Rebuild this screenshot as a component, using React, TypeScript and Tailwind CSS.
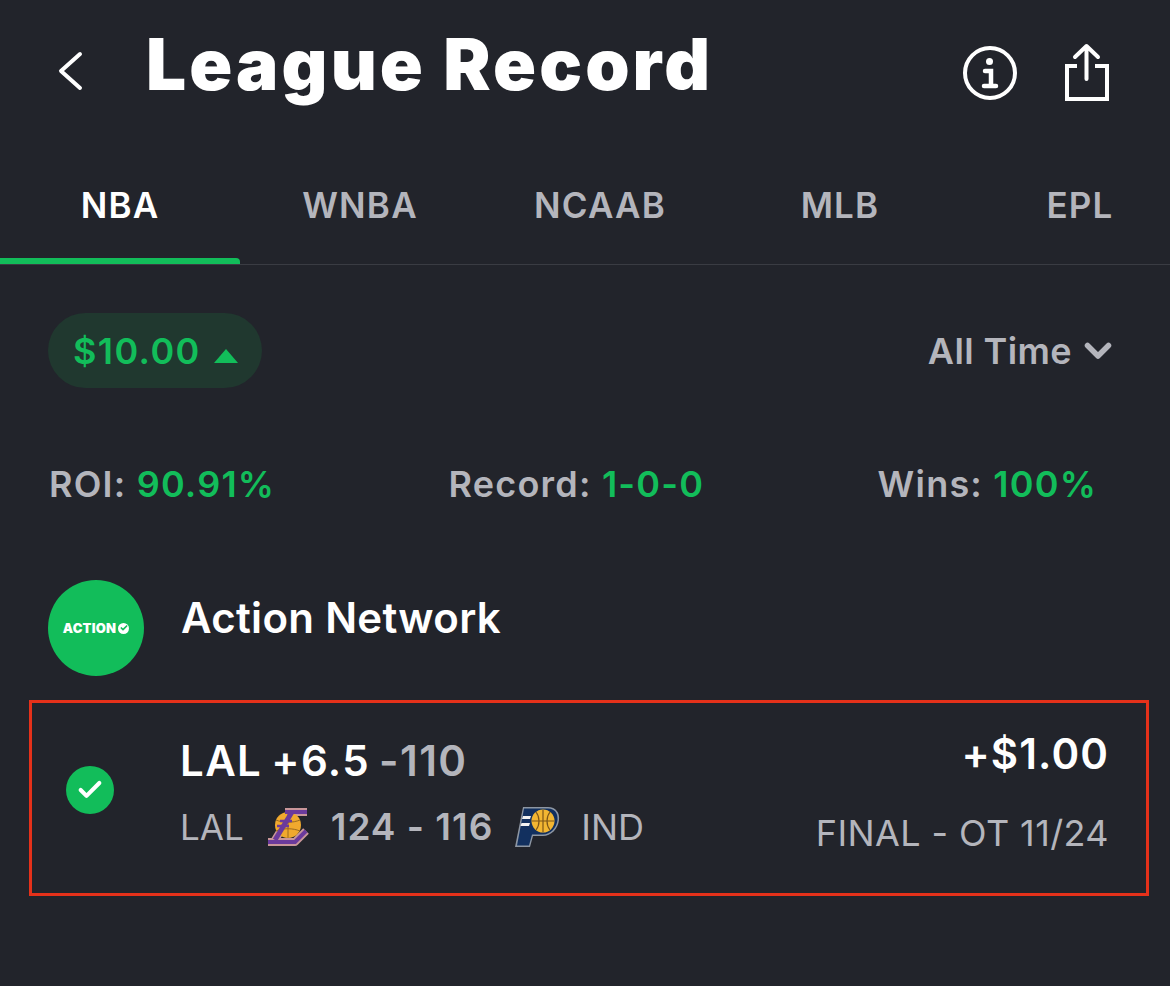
import React from 'react';
import { Check } from 'lucide-react';

const tabs = ['NBA', 'WNBA', 'NCAAB', 'MLB', 'EPL'];

function BackIcon() {
  return (
    <svg width="28" height="40" viewBox="0 0 28 40" fill="none" stroke="#fff" strokeWidth="4" strokeLinecap="round" strokeLinejoin="round">
      <path d="M23 3 4 20l19 17" />
    </svg>
  );
}

function InfoIcon() {
  return (
    <svg width="56" height="56" viewBox="0 0 56 56" fill="none" stroke="#fff" strokeLinecap="round">
      <circle cx="28" cy="28" r="25" strokeWidth="4" />
      <circle cx="27.5" cy="16.5" r="3.5" fill="#fff" stroke="none" />
      <path d="M23 26h6v14M22 41h12" strokeWidth="4.5" />
    </svg>
  );
}

function ShareIcon() {
  return (
    <svg width="46" height="60" viewBox="0 0 46 60" fill="none" stroke="#fff" strokeWidth="4" strokeLinecap="round" strokeLinejoin="round">
      <path d="M22.500 36V3M11 14 22.500 3 34 14" />
      <path d="M13 23H3v33h40V23H31" strokeLinecap="butt" strokeLinejoin="miter" />
    </svg>
  );
}

function TimeChevron() {
  return (
    <svg width="28" height="20" viewBox="0 0 28 20" fill="none" stroke="#b4b5bc" strokeWidth="5.500" strokeLinecap="round" strokeLinejoin="round">
      <path d="M3.500 4.500 14 15 24.500 4.500" />
    </svg>
  );
}

function LakersLogo() {
  const stem = 'M27 5 10 33';
  const bars = 'M20 5h22M3 35h27l11-11';
  const stripes = 'M15 14h12M12 19h12';
  return (
    <svg width="46" height="40" viewBox="0 0 46 40" fill="none" strokeLinejoin="round">
      <path d={`${stem}${bars}`} stroke="#c9969a" strokeWidth="8" />
      <circle cx="23" cy="18" r="13" fill="#f0a92e" />
      <path d="M23 5v26M11 13c7 3 17 3 24 0M11 24c7-3 17-3 24 0" stroke="#9a6a20" strokeWidth="1" />
      <path d={stem} stroke="#6b3a9c" strokeWidth="5" />
      <path d={bars} stroke="#6b3a9c" strokeWidth="4" />
      <path d={stripes} stroke="#6b3a9c" strokeWidth="2.500" />
    </svg>
  );
}

function PacersLogo() {
  return (
    <svg width="46" height="40" viewBox="0 0 46 40">
      <path d="M8 0h25c8 0 12 6 11 13-1 9-8 16-16 16H18l-3 11H0z" fill="#8d96a3" />
      <path d="M9 1.500h24c7 0 10 5 9.500 11.500-1 8-7 14.500-14.500 14.500H17l-3 11H2z" fill="#12305f" />
      <circle cx="28" cy="14" r="11.500" fill="#f2b632" />
      <path d="M17 14h22M28 3v22M21 5c4 5 4 13 0 18M35 5c-4 5-4 13 0 18" stroke="#7c5518" strokeWidth="1.200" fill="none" />
      <path d="M8 9h8l-1 3H7zM6.500 16H15l-1 3H5.500z" fill="#f2f2f2" />
    </svg>
  );
}

function Stat({ label, value }: { label: string; value: string }) {
  return (
    <span className="text-[36px] font-semibold leading-none tracking-[1.200px] text-[#b4b5bc]">
      {label}: <span className="text-[#12bd5a]">{value}</span>
    </span>
  );
}

export default function App() {
  return (
    <div
      className="h-[986px] w-[1170px] overflow-hidden bg-[#22242b] text-white"
      style={{ fontFamily: 'Inter, "Liberation Sans", sans-serif' }}
    >
      <header className="flex h-[136px] items-start pl-[57px] pr-[60px]">
        <div className="mt-[51px]">
          <BackIcon />
        </div>
        <h1 className="ml-[61px] mt-[24px] text-[71px] font-black leading-[80px] tracking-[3.100px] text-white">
          League Record
        </h1>
        <div className="ml-auto mt-[43px] flex items-center gap-[46px]">
          <InfoIcon />
          <ShareIcon />
        </div>
      </header>

      <nav className="flex h-[129px] overflow-hidden border-b border-[#3a3c43]">
        {tabs.map((tab, i) => (
          <div key={tab} className="flex h-[128px] w-[240px] shrink-0 flex-col">
            <div
              className={`flex flex-1 items-center justify-center pt-[16px] text-[35px] font-semibold tracking-[1.200px] ${
                i === 0 ? 'text-white' : 'text-[#b4b5bc]'
              }`}
            >
              {tab}
            </div>
            <div className={`h-[6px] rounded-tr-[4px] ${i === 0 ? 'bg-[#12bd5a]' : ''}`} />
          </div>
        ))}
      </nav>

      <div className="mt-[48px] flex items-center justify-between pl-[48px] pr-[58px]">
        <div className="flex h-[75px] w-[214px] items-center gap-[13px] rounded-full bg-[#20382f] pl-[25px]">
          <span className="text-[36px] font-semibold leading-none tracking-[1.400px] text-[#12bd5a]">$10.00</span>
          <span className="mt-[10px] h-0 w-0 border-x-[12px] border-b-[14px] border-x-transparent border-b-[#12bd5a]" />
        </div>
        <div className="flex items-center gap-[12px] text-[#b4b5bc]">
          <span className="text-[36px] font-semibold leading-none tracking-[0.4px]">All Time</span>
          <TimeChevron />
        </div>
      </div>

      <div className="mt-[78px] flex items-center justify-between pl-[49px] pr-[73px]">
        <Stat label="ROI" value="90.91%" />
        <Stat label="Record" value="1-0-0" />
        <Stat label="Wins" value="100%" />
      </div>

      <div className="mt-[78px] flex items-start pl-[48px]">
        <div className="flex h-[96px] w-[96px] items-center justify-center gap-[2px] rounded-full bg-[#12bd5a]">
          <span className="text-[13px] font-black leading-none tracking-[0.2px] text-white">ACTION</span>
          <span className="flex h-[11px] w-[11px] items-center justify-center rounded-full bg-white">
            <Check className="h-[8px] w-[8px] text-[#12bd5a]" strokeWidth={5} />
          </span>
        </div>
        <span className="ml-[37px] mt-[14px] text-[42px] font-semibold leading-[48px] tracking-[0.3px] text-white">
          Action Network
        </span>
      </div>

      <div className="ml-[29px] mt-[24px] flex h-[196px] w-[1120px] items-start border-[3px] border-[#e5311a] pl-[34px] pr-[37px]">
        <div className="mt-[63px] flex h-[48px] w-[48px] items-center justify-center rounded-full bg-[#12bd5a]">
          <Check className="h-[28px] w-[28px] text-white" strokeWidth={3.5} />
        </div>
        <div className="ml-[66px] mt-[34px] flex flex-col">
          <div className="text-[42px] font-semibold leading-[48px] tracking-[1.400px] [word-spacing:-3px]">
            LAL +6.5 <span className="text-[#b4b5bc]">-110</span>
          </div>
          <div className="mt-[22px] flex items-center text-[#b4b5bc]">
            <span className="text-[35px] leading-[40px]">LAL</span>
            <span className="ml-[21px]">
              <LakersLogo />
            </span>
            <span className="ml-[20px] text-[37px] font-semibold leading-[40px] tracking-[1px]">124 - 116</span>
            <span className="ml-[22px]">
              <PacersLogo />
            </span>
            <span className="ml-[20px] text-[36px] leading-[40px]">IND</span>
          </div>
        </div>
        <div className="ml-auto mt-[27px] flex flex-col items-end">
          <div className="text-[42px] font-semibold leading-[48px] tracking-[1.100px] text-white">+$1.00</div>
          <div className="mt-[35px] text-[36px] leading-[40px] tracking-[0.4px] text-[#b4b5bc]">FINAL - OT 11/24</div>
        </div>
      </div>
    </div>
  );
}
